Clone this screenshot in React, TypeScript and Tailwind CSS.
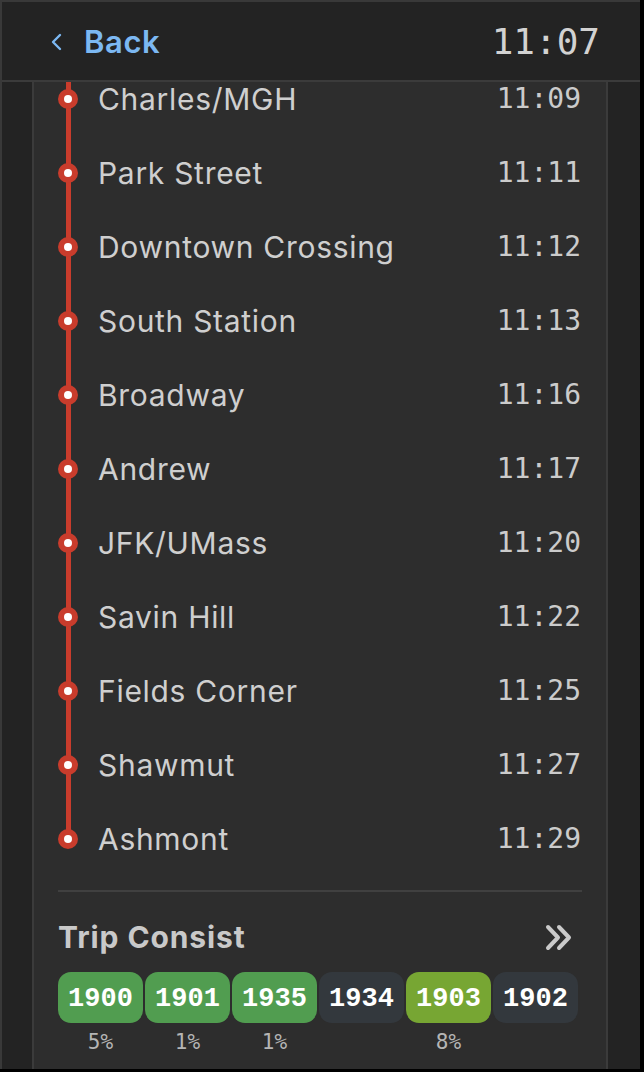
import React from "react";

const stations: [string, string][] = [
  ["Charles/MGH", "11:09"],
  ["Park Street", "11:11"],
  ["Downtown Crossing", "11:12"],
  ["South Station", "11:13"],
  ["Broadway", "11:16"],
  ["Andrew", "11:17"],
  ["JFK/UMass", "11:20"],
  ["Savin Hill", "11:22"],
  ["Fields Corner", "11:25"],
  ["Shawmut", "11:27"],
  ["Ashmont", "11:29"],
];

const cars: { id: string; color: string; pct: string }[] = [
  { id: "1900", color: "bg-[#519d50]", pct: "5%" },
  { id: "1901", color: "bg-[#519d50]", pct: "1%" },
  { id: "1935", color: "bg-[#519d50]", pct: "1%" },
  { id: "1934", color: "bg-[#33383d]", pct: "" },
  { id: "1903", color: "bg-[#77a633]", pct: "8%" },
  { id: "1902", color: "bg-[#33383d]", pct: "" },
];

const sans = "font-['Inter','Noto_Sans',sans-serif]";
const mono = "font-['DejaVu_Sans_Mono','Liberation_Mono',monospace]";

export default function App() {
  return (
    <div className="w-[644px] h-[1072px] bg-black overflow-hidden">
      <div className="w-[640px] h-[1069px] bg-[#232323] border-l-2 border-t-2 border-[#393939] flex flex-col overflow-hidden">
        {/* Header */}
        <div className="h-[80px] shrink-0 border-b-2 border-[#3b3b3b] flex items-center justify-between pl-[47px] pr-[40px]">
          <div className="flex items-center">
            <svg width="14" height="20" viewBox="0 0 14 20" className="mt-[2px]">
              <polyline points="11,3 4,10 11,17" fill="none" stroke="#7cb8f2" strokeWidth="2.4" strokeLinecap="round" strokeLinejoin="round" />
            </svg>
            <span className={`${sans} ml-[21px] text-[31px] tracking-[0.6px] font-semibold text-[#7cb8f2] leading-none`}>Back</span>
          </div>
          <span className={`${mono} text-[36px] text-[#d2d2d2] leading-none mt-[2px]`}>11:07</span>
        </div>

        {/* Panel */}
        <div className="flex-1 ml-[30px] w-[576px] bg-[#2d2d2d] border-x-2 border-[#3b3b3b] px-6 flex flex-col overflow-hidden">
          <div className="relative -mt-[20px]">
            <div className="absolute left-[7.5px] top-0 bottom-[37px] w-[5px] bg-[#c93c2c]" />
            {stations.map(([name, time]) => (
              <div key={name} className="relative h-[74px] flex items-center">
                <div className="w-5 h-5 rounded-full bg-[#c93c2c] flex items-center justify-center shrink-0">
                  <div className="w-2 h-2 rounded-full bg-white" />
                </div>
                <span className={`${sans} ml-5 text-[30px] tracking-[0.7px] text-[#cfcfcf] leading-none`}>{name}</span>
                <span className={`${mono} ml-auto mr-[1px] text-[28px] text-[#cbcbcb] leading-none`}>{time}</span>
              </div>
            ))}
          </div>

          <div className="mt-[14px] h-[2px] bg-[#404040]" />

          <div className="mt-[28px] h-[34px] flex items-center justify-between">
            <span className={`${sans} text-[30px] tracking-[0.9px] font-bold text-[#c9c9c9] leading-none`}>Trip Consist</span>
            <svg width="27" height="27" viewBox="0 0 27 27" className="mr-[10px]">
              <polyline points="3,3 13,13.5 3,24" fill="none" stroke="#cacaca" strokeWidth="4" strokeLinejoin="round" strokeLinecap="round" />
              <polyline points="14,3 24,13.5 14,24" fill="none" stroke="#cacaca" strokeWidth="4" strokeLinejoin="round" strokeLinecap="round" />
            </svg>
          </div>

          <div className="mt-[18px] flex gap-[2px]">
            {cars.map((c) => (
              <div key={c.id} className="w-[85px] flex flex-col items-center">
                <div className={`${c.color} w-[85px] h-[51px] rounded-[13px] flex items-center justify-center pt-[3px]`}>
                  <span className="font-['Liberation_Mono','DejaVu_Sans_Mono',monospace] font-bold text-[27px] text-white leading-none">{c.id}</span>
                </div>
                <span className={`${mono} mt-[9px] text-[21px] text-[#b5b5b5] leading-none h-[21px]`}>{c.pct}</span>
              </div>
            ))}
          </div>
        </div>
      </div>
    </div>
  );
}
